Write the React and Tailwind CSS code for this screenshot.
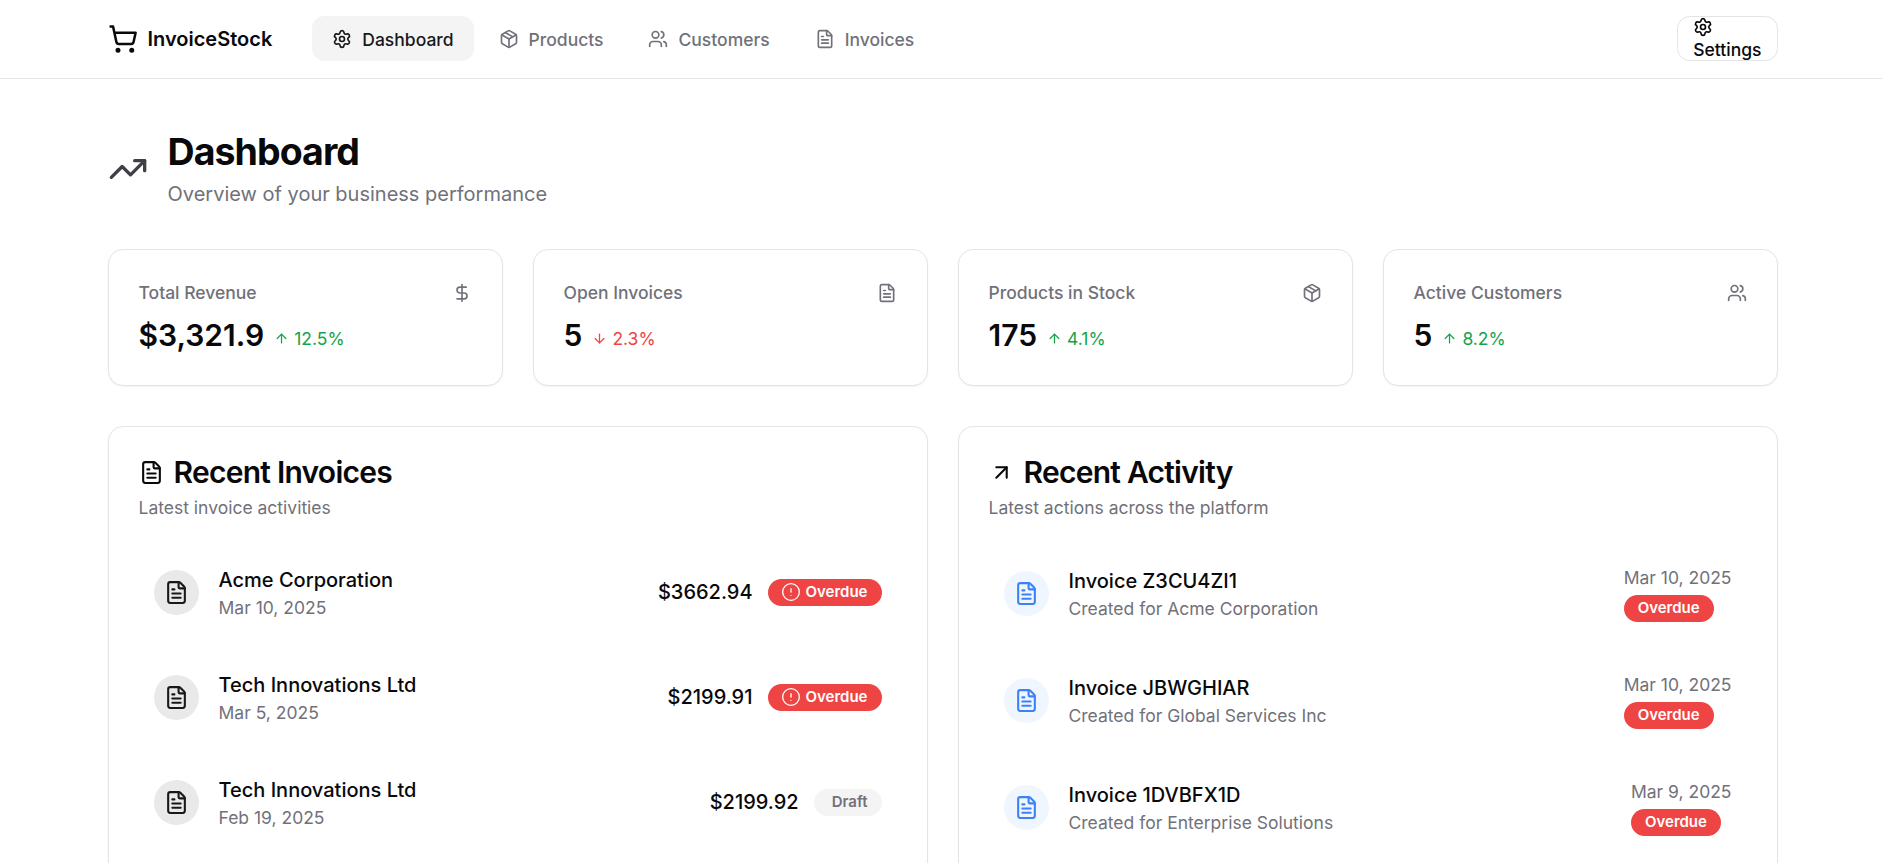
import {
  ShoppingCart,
  Settings,
  Package,
  Users,
  FileText,
  TrendingUp,
  DollarSign,
  ArrowUp,
  ArrowDown,
  ArrowUpRight,
  CircleAlert,
} from 'lucide-react';

const stats = [
  { label: 'Total Revenue', value: '$3,321.9', change: '12.5%', up: true, icon: DollarSign },
  { label: 'Open Invoices', value: '5', change: '2.3%', up: false, icon: FileText },
  { label: 'Products in Stock', value: '175', change: '4.1%', up: true, icon: Package },
  { label: 'Active Customers', value: '5', change: '8.2%', up: true, icon: Users },
];

const invoices = [
  { name: 'Acme Corporation', date: 'Mar 10, 2025', amount: '$3662.94', status: 'Overdue' },
  { name: 'Tech Innovations Ltd', date: 'Mar 5, 2025', amount: '$2199.91', status: 'Overdue' },
  { name: 'Tech Innovations Ltd', date: 'Feb 19, 2025', amount: '$2199.92', status: 'Draft' },
];

const activity = [
  { title: 'Invoice Z3CU4ZI1', note: 'Created for Acme Corporation', date: 'Mar 10, 2025' },
  { title: 'Invoice JBWGHIAR', note: 'Created for Global Services Inc', date: 'Mar 10, 2025' },
  { title: 'Invoice 1DVBFX1D', note: 'Created for Enterprise Solutions', date: 'Mar 9, 2025' },
];

function NavLink({ icon: Icon, label, active }) {
  return (
    <a
      className={`flex h-[45px] items-center gap-[10px] rounded-[12.5px] px-5 text-[17.5px] leading-[27px] font-medium ${
        active ? 'bg-[#f4f4f5] text-[#18181b]' : 'text-[#71717a]'
      }`}
    >
      <Icon size={20} />
      <span className="pt-px">{label}</span>
    </a>
  );
}

function StatCard({ stat }) {
  const Icon = stat.icon;
  const Arrow = stat.up ? ArrowUp : ArrowDown;
  return (
    <div className="rounded-[15px] border border-[#e4e4e7] bg-white p-[30px] shadow-[0_1px_2px_rgba(0,0,0,0.05)]">
      <div className="flex items-center justify-between pb-[10px]">
        <span className="text-[17.5px] leading-[25px] font-medium text-[#71717a]">{stat.label}</span>
        <Icon size={20} className="text-[#71717a]" />
      </div>
      <div className="flex items-baseline">
        <span className="text-[30px] leading-[40px] font-semibold text-[#09090b]">{stat.value}</span>
        <span
          className={`ml-[10px] flex items-center gap-[5px] text-[17.5px] leading-[25px] ${
            stat.up ? 'text-[#16a34a]' : 'text-[#ef4444]'
          }`}
        >
          <Arrow size={15} />
          {stat.change}
        </span>
      </div>
    </div>
  );
}

function Panel({ icon: Icon, title, sub, children }) {
  return (
    <div className="rounded-[15px] border border-[#e4e4e7] bg-white p-[30px] shadow-[0_1px_2px_rgba(0,0,0,0.05)]">
      <h2 className="flex items-center gap-[10px] text-[30px] leading-[30px] font-semibold tracking-tight text-[#09090b]">
        <Icon size={25} />
        {title}
      </h2>
      <p className="mt-[7.5px] text-[17.5px] leading-[25px] text-[#71717a]">{sub}</p>
      <div className="mt-[30px] flex flex-col gap-5">{children}</div>
    </div>
  );
}

function InvoiceRow({ row }) {
  const overdue = row.status === 'Overdue';
  return (
    <div className="flex items-center justify-between p-[15px]">
      <div className="flex items-center gap-5">
        <div className="flex h-[45px] w-[45px] items-center justify-center rounded-full bg-[#e9e9ea]">
          <FileText size={25} className="text-[#18181b]" />
        </div>
        <div>
          <p className="text-[20px] leading-[30px] font-medium text-[#09090b]">{row.name}</p>
          <p className="text-[17.5px] leading-[25px] text-[#71717a]">{row.date}</p>
        </div>
      </div>
      <div className="flex items-center gap-[15px]">
        <span className="text-[20px] leading-[30px] font-medium text-[#09090b]">{row.amount}</span>
        {overdue ? (
          <span className="flex h-[27px] items-center gap-[5px] rounded-full bg-[#ef4444] pr-[14px] pl-[13px] text-[15px] font-semibold text-white">
            <CircleAlert size={20} strokeWidth={1.6} />
            Overdue
          </span>
        ) : (
          <span className="flex h-[27px] items-center rounded-full bg-[#f4f4f5] pr-[14px] pl-[18px] text-[15px] font-semibold text-[#71717a]">
            Draft
          </span>
        )}
      </div>
    </div>
  );
}

function ActivityRow({ row }) {
  return (
    <div className="flex items-center justify-between p-[15px]">
      <div className="flex items-center gap-5">
        <div className="flex h-[45px] w-[45px] items-center justify-center rounded-full bg-[#eff6ff]">
          <FileText size={25} className="text-[#3b82f6]" />
        </div>
        <div>
          <p className="text-[20px] leading-[30px] font-medium text-[#09090b]">{row.title}</p>
          <p className="text-[17.5px] leading-[25px] text-[#71717a]">{row.note}</p>
        </div>
      </div>
      <div className="flex flex-col items-start gap-[5px]">
        <span className="text-[17.5px] leading-[25px] text-[#71717a]">{row.date}</span>
        <span className="flex h-[27px] items-center rounded-full bg-[#ef4444] px-[14px] text-[15px] font-semibold text-white">
          Overdue
        </span>
      </div>
    </div>
  );
}

export default function App() {
  return (
    <div className="h-screen overflow-hidden bg-white font-[Inter,sans-serif]">
      <header className="border-b border-[#e4e4e7] bg-white">
        <div className="ml-[107.5px] flex h-[78px] w-[1670px] items-center justify-between pb-px">
          <div className="flex items-center gap-10">
            <div className="flex items-center gap-[10px]">
              <ShoppingCart size={30} className="text-[#09090b]" />
              <span className="text-[20px] font-semibold text-[#09090b]">InvoiceStock</span>
            </div>
            <nav className="flex items-center gap-[5px]">
              <NavLink icon={Settings} label="Dashboard" active />
              <NavLink icon={Package} label="Products" />
              <NavLink icon={Users} label="Customers" />
              <NavLink icon={FileText} label="Invoices" />
            </nav>
          </div>
          <button className="h-[45px] rounded-[12.5px] border border-[#e4e4e7] bg-white px-[15px] text-left text-[17.5px] leading-[25px] font-medium text-[#09090b]">
            <Settings size={20} />
            Settings
          </button>
        </div>
      </header>

      <main className="ml-[107.5px] w-[1670px] pt-[50px]">
        <div className="mb-10 flex items-center gap-5">
          <TrendingUp size={40} className="text-[#3f3f46]" />
          <div>
            <h1 className="text-[37.5px] leading-[45px] font-bold tracking-tight text-[#09090b]">Dashboard</h1>
            <p className="mt-[5px] text-[20px] leading-[30px] text-[#71717a]">Overview of your business performance</p>
          </div>
        </div>

        <div className="mb-10 grid grid-cols-4 gap-[30px]">
          {stats.map((s) => (
            <StatCard key={s.label} stat={s} />
          ))}
        </div>

        <div className="grid grid-cols-2 gap-[30px]">
          <Panel icon={FileText} title="Recent Invoices" sub="Latest invoice activities">
            {invoices.map((r) => (
              <InvoiceRow key={r.amount} row={r} />
            ))}
          </Panel>
          <Panel icon={ArrowUpRight} title="Recent Activity" sub="Latest actions across the platform">
            {activity.map((r) => (
              <ActivityRow key={r.title} row={r} />
            ))}
          </Panel>
        </div>
      </main>
    </div>
  );
}
